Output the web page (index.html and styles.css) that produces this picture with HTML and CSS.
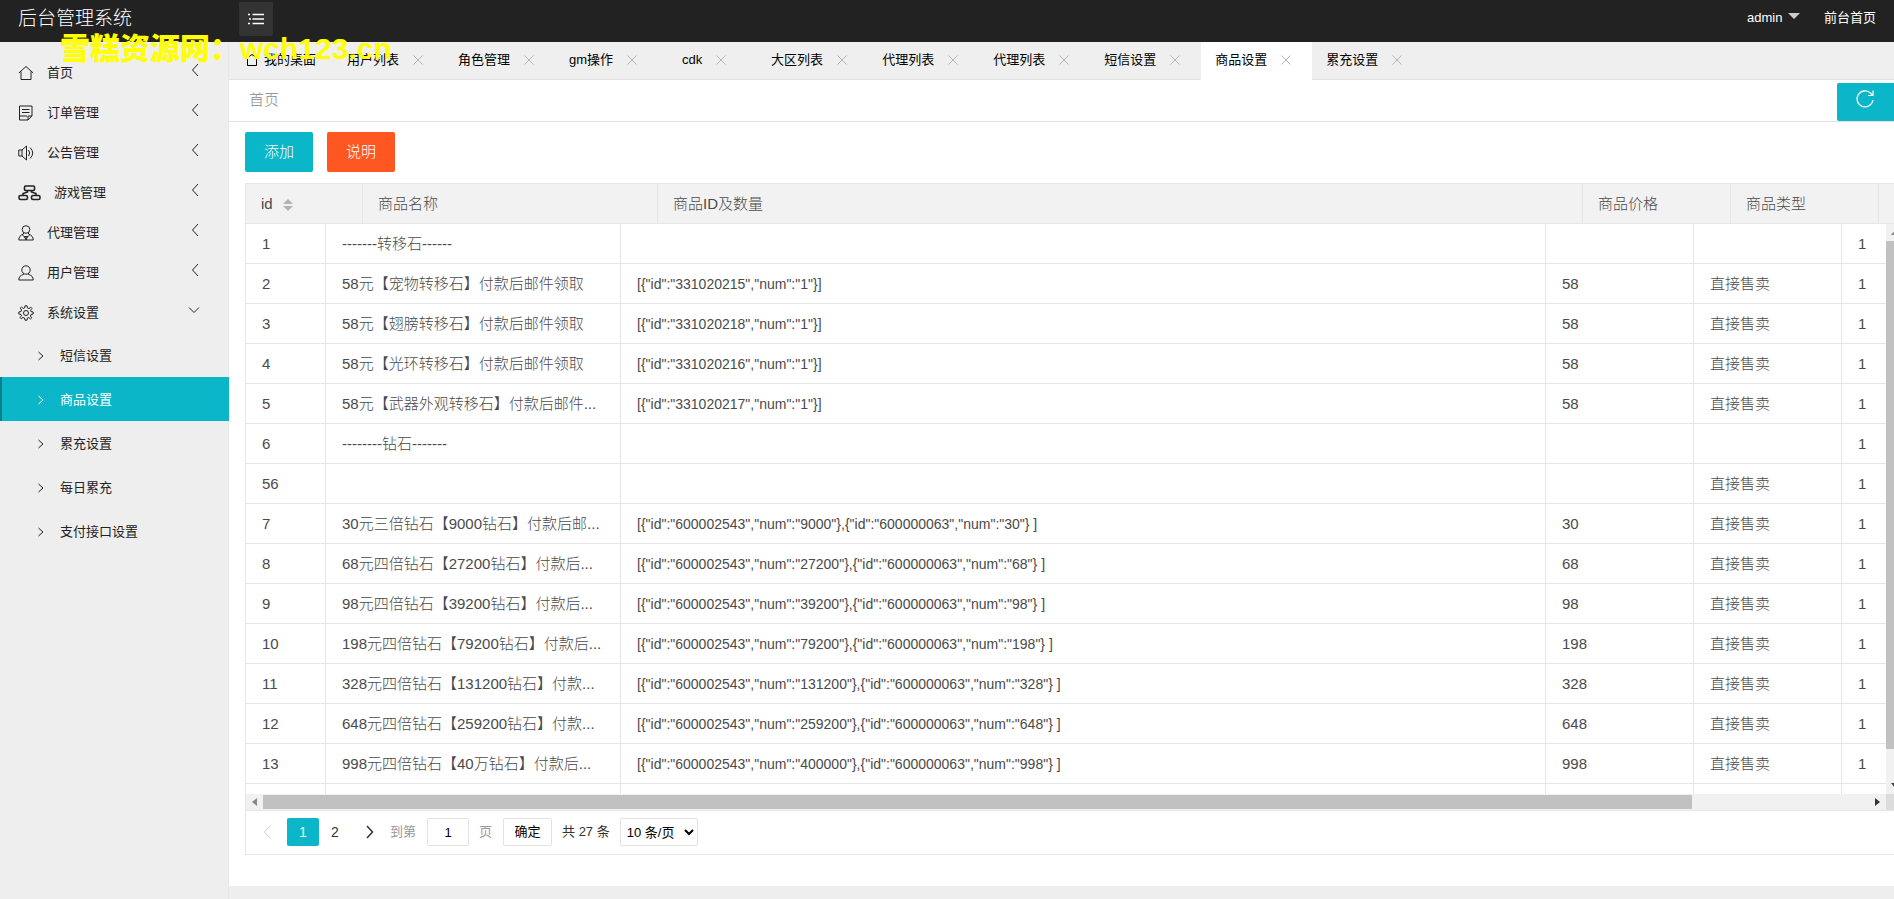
FILE: index.html
```html
<!DOCTYPE html>
<html lang="zh-CN">
<head>
<meta charset="utf-8">
<title>后台管理系统</title>
<link rel="stylesheet" href="styles.css">
</head>
<body>
<svg class="sprite" aria-hidden="true">
  <symbol id="left" viewBox="0 0 8 14"><path d="M7 1 1.5 7 7 13"/></symbol>
  <symbol id="down" viewBox="0 0 12 8"><path d="M1 1.5 6 6.500 11 1.500"/></symbol>
  <symbol id="right" viewBox="0 0 8 10"><path d="M1.500 1 6 5 1.500 9"/></symbol>
  <symbol id="close" viewBox="0 0 10 10"><path d="M.5.5l9 9M9.500.5l-9 9"/></symbol>
</svg>

<header class="topbar">
  <h1 class="brand">后台管理系统</h1>
  <button class="toggle" type="button" aria-label="菜单">
    <svg class="icon" width="16" height="12" viewBox="0 0 16 12"><path d="M4.500 1.500H16M4.500 6H16M4.500 10.500H16M0 1.500h2M1 6h2M0 10.500h2"/></svg>
  </button>
  <nav class="topnav">
    <a href="#">admin <span class="caret"></span></a>
    <a href="#">前台首页</a>
  </nav>
  <div class="watermark">雪糕资源网：wch123.cn</div>
</header>

<div class="layout">
  <aside class="sidebar">
    <a class="item" href="#"><svg class="icon" width="16" height="16" viewBox="0 0 16 16"><path d="M.8 8 8 1.500 15.200 8M3 6.500V14.500H13V6.500"/></svg><span>首页</span><svg class="icon arrow" width="8" height="14"><use href="#left"/></svg></a>
    <a class="item" href="#"><svg class="icon" width="16" height="16" viewBox="0 0 16 16"><path d="M1.500 1H14V11L10 15H1.500ZM14 11H10V15M4 4.500H11.500M4 7.500H11.500M1.500 11H9"/></svg><span>订单管理</span><svg class="icon arrow" width="8" height="14"><use href="#left"/></svg></a>
    <a class="item" href="#"><svg class="icon" width="16" height="16" viewBox="0 0 16 16"><path d="M.8 5H4L8.500 1V15L4 11H.8ZM4 5V11M10.500 5Q13 8 10.500 11M12 2.500Q17.500 8 12 13.500"/></svg><span>公告管理</span><svg class="icon arrow" width="8" height="14"><use href="#left"/></svg></a>
    <a class="item" href="#"><svg class="icon bold" width="23" height="16" viewBox="0 0 23 16"><rect x="6.500" y="1" width="10" height="4.500" rx="1"/><rect x="1" y="10.500" width="8.500" height="4" rx="1.500"/><rect x="13.500" y="10.500" width="8.500" height="4" rx="1.500"/><path d="M9.500 5.500V7L5 8.500V10M13.500 5.500V7L18 8.500V10"/></svg><span>游戏管理</span><svg class="icon arrow" width="8" height="14"><use href="#left"/></svg></a>
    <a class="item" href="#"><svg class="icon" width="16" height="16" viewBox="0 0 16 16"><circle cx="8" cy="4.500" r="3.800"/><path d="M5.500 7.500V9Q.8 10.500.8 15H15.200Q15.200 10.500 10.500 9V7.500M4.500 10 8 13.500 11.500 10M6.500 11.500H9.500L8 15Z"/></svg><span>代理管理</span><svg class="icon arrow" width="8" height="14"><use href="#left"/></svg></a>
    <a class="item" href="#"><svg class="icon" width="16" height="16" viewBox="0 0 16 16"><circle cx="8" cy="5" r="4.200"/><path d="M5.500 8.500V9.500Q.8 10.500.8 15H15.200Q15.200 10.500 10.500 9.500V8.500"/></svg><span>用户管理</span><svg class="icon arrow" width="8" height="14"><use href="#left"/></svg></a>
    <a class="item" href="#"><svg class="icon" width="16" height="16" viewBox="0 0 16 16"><path d="M6.500 3 7 .8H9L9.500 3 11 3.600 12.800 2.200 14 3.500 12.500 5.200 13 6.500 15.200 7V9L13 9.500 12.400 11 13.800 12.800 12.500 14 10.800 12.500 9.500 13 9 15.200H7L6.500 13 5 12.400 3.200 13.800 2 12.500 3.500 10.800 3 9.500.8 9V7L3 6.500 3.600 5 2.200 3.200 3.500 2 5.200 3.500Z"/><circle cx="8" cy="8" r="2.500"/></svg><span>系统设置</span><svg class="icon arrow open" width="12" height="8"><use href="#down"/></svg></a>
    <a class="sub" href="#"><svg class="icon" width="8" height="10"><use href="#right"/></svg>短信设置</a>
    <a class="sub active" href="#"><svg class="icon" width="8" height="10"><use href="#right"/></svg>商品设置</a>
    <a class="sub" href="#"><svg class="icon" width="8" height="10"><use href="#right"/></svg>累充设置</a>
    <a class="sub" href="#"><svg class="icon" width="8" height="10"><use href="#right"/></svg>每日累充</a>
    <a class="sub" href="#"><svg class="icon" width="8" height="10"><use href="#right"/></svg>支付接口设置</a>
  </aside>

  <main class="main">
    <nav class="tabs">
      <a class="tab home" href="#"><svg class="icon" width="12" height="14" viewBox="0 0 12 14"><path d="M1 5 6 1.500 11 5M1.500 5V12.500H10.500V5"/></svg>我的桌面</a>
      <a class="tab" href="#">用户列表<svg class="icon x" width="18" height="10"><use href="#close"/></svg></a>
      <a class="tab" href="#">角色管理<svg class="icon x" width="18" height="10"><use href="#close"/></svg></a>
      <a class="tab" href="#">gm操作<svg class="icon x" width="18" height="10"><use href="#close"/></svg></a>
      <a class="tab" href="#">cdk<svg class="icon x" width="18" height="10"><use href="#close"/></svg></a>
      <a class="tab" href="#">大区列表<svg class="icon x" width="18" height="10"><use href="#close"/></svg></a>
      <a class="tab" href="#">代理列表<svg class="icon x" width="18" height="10"><use href="#close"/></svg></a>
      <a class="tab" href="#">代理列表<svg class="icon x" width="18" height="10"><use href="#close"/></svg></a>
      <a class="tab" href="#">短信设置<svg class="icon x" width="18" height="10"><use href="#close"/></svg></a>
      <a class="tab current" href="#">商品设置<svg class="icon x" width="18" height="10"><use href="#close"/></svg></a>
      <a class="tab" href="#">累充设置<svg class="icon x" width="18" height="10"><use href="#close"/></svg></a>
    </nav>

    <div class="crumbs">
      <a href="#">首页</a>
      <button class="refresh" type="button" aria-label="刷新"><svg class="icon" width="20" height="20" viewBox="0 0 20 20"><path d="M18 11A8 8 0 1 1 16 4.500L18 6.500M18 1.500V6.500H13"/></svg></button>
    </div>

    <div class="actions">
      <button class="btn" type="button">添加</button>
      <button class="btn warn" type="button">说明</button>
    </div>

    <section class="view">
      <div class="head">
        <table class="grid">
          <colgroup><col class="c-idh"><col class="c-name"><col class="c-data"><col class="c-price"><col class="c-price"><col class="c-price"></colgroup>
          <thead><tr><th>id <span class="sort"></span></th><th>商品名称</th><th>商品ID及数量</th><th>商品价格</th><th>商品类型</th><th></th></tr></thead>
        </table>
      </div>
      <div class="rows">
        <table class="grid">
          <colgroup><col class="c-id"><col class="c-name"><col class="c-data"><col class="c-price"><col class="c-price"><col class="c-price"></colgroup>
          <tbody>
          <tr><td>1</td><td>-------转移石------</td><td></td><td></td><td></td><td>1</td></tr>
          <tr><td>2</td><td>58元【宠物转移石】付款后邮件领取</td><td>[{"id":"331020215","num":"1"}]</td><td>58</td><td>直接售卖</td><td>1</td></tr>
          <tr><td>3</td><td>58元【翅膀转移石】付款后邮件领取</td><td>[{"id":"331020218","num":"1"}]</td><td>58</td><td>直接售卖</td><td>1</td></tr>
          <tr><td>4</td><td>58元【光环转移石】付款后邮件领取</td><td>[{"id":"331020216","num":"1"}]</td><td>58</td><td>直接售卖</td><td>1</td></tr>
          <tr><td>5</td><td>58元【武器外观转移石】付款后邮件...</td><td>[{"id":"331020217","num":"1"}]</td><td>58</td><td>直接售卖</td><td>1</td></tr>
          <tr><td>6</td><td>--------钻石-------</td><td></td><td></td><td></td><td>1</td></tr>
          <tr><td>56</td><td></td><td></td><td></td><td>直接售卖</td><td>1</td></tr>
          <tr><td>7</td><td>30元三倍钻石【9000钻石】付款后邮...</td><td>[{"id":"600002543","num":"9000"},{"id":"600000063","num":"30"} ]</td><td>30</td><td>直接售卖</td><td>1</td></tr>
          <tr><td>8</td><td>68元四倍钻石【27200钻石】付款后...</td><td>[{"id":"600002543","num":"27200"},{"id":"600000063","num":"68"} ]</td><td>68</td><td>直接售卖</td><td>1</td></tr>
          <tr><td>9</td><td>98元四倍钻石【39200钻石】付款后...</td><td>[{"id":"600002543","num":"39200"},{"id":"600000063","num":"98"} ]</td><td>98</td><td>直接售卖</td><td>1</td></tr>
          <tr><td>10</td><td>198元四倍钻石【79200钻石】付款后...</td><td>[{"id":"600002543","num":"79200"},{"id":"600000063","num":"198"} ]</td><td>198</td><td>直接售卖</td><td>1</td></tr>
          <tr><td>11</td><td>328元四倍钻石【131200钻石】付款...</td><td>[{"id":"600002543","num":"131200"},{"id":"600000063","num":"328"} ]</td><td>328</td><td>直接售卖</td><td>1</td></tr>
          <tr><td>12</td><td>648元四倍钻石【259200钻石】付款...</td><td>[{"id":"600002543","num":"259200"},{"id":"600000063","num":"648"} ]</td><td>648</td><td>直接售卖</td><td>1</td></tr>
          <tr><td>13</td><td>998元四倍钻石【40万钻石】付款后...</td><td>[{"id":"600002543","num":"400000"},{"id":"600000063","num":"998"} ]</td><td>998</td><td>直接售卖</td><td>1</td></tr>
          <tr><td></td><td></td><td></td><td></td><td></td><td></td></tr>
          </tbody>
        </table>
      </div>
      <div class="vbar"><span class="tri up"></span><span class="vthumb"></span><span class="tri dn"></span></div>
      <div class="hbar"><span class="tri lt"></span><span class="track"><span class="hthumb"></span></span><span class="tri rt"></span></div>
      <div class="corner"></div>
      <form class="pager">
        <a class="pg off" href="#" aria-label="上一页"><svg class="icon" width="8" height="14"><use href="#left"/></svg></a>
        <a class="pg on" href="#">1</a>
        <a class="pg" href="#">2</a>
        <a class="pg next" href="#" aria-label="下一页"><svg class="icon" width="8" height="14"><use href="#left"/></svg></a>
        <label class="muted" for="page">到第</label>
        <input class="num" id="page" type="text" value="1">
        <span class="muted">页</span>
        <button class="ok" type="button">确定</button>
        <span class="total">共 27 条</span>
        <select class="size" aria-label="每页条数"><option>10 条/页</option></select>
      </form>
    </section>
  </main>
</div>
</body>
</html>
```
FILE: styles.css
```css
* { box-sizing: border-box; }
body {
  margin: 0;
  height: 100vh;
  display: flex;
  flex-direction: column;
  overflow: hidden;
  background: #eee;
  color: #222;
  font: 400 13px/20px "Liberation Sans", "Noto Sans CJK SC", sans-serif;
}
a { color: inherit; text-decoration: none; }
button, input, select { font: inherit; }
.sprite { position: absolute; width: 0; height: 0; }
.icon { flex: none; fill: none; stroke: currentColor; stroke-width: 1; }
.icon.bold { stroke-width: 1.6; }

.topbar {
  position: relative;
  flex: none;
  height: 42px;
  display: flex;
  background: #222;
  color: #fff;
}
.brand { width: 239px; margin: 0; padding-left: 18px; font-size: 19px; font-weight: 300; line-height: 38px; }
.toggle {
  width: 34px;
  height: 34px;
  margin-top: 2px;
  padding: 0;
  border: 0;
  border-radius: 2px;
  background: #333;
  color: #fff;
  display: grid;
  place-items: center;
}
.toggle .icon { stroke-width: 1.5; }
.topnav { margin-left: auto; display: flex; gap: 24px; padding-right: 18px; line-height: 36px; }
.caret { display: inline-block; border: 6px solid transparent; border-top-color: #ccc; border-bottom: 0; margin-left: 2px; vertical-align: 3px; }
.watermark {
  position: absolute;
  left: 60px;
  top: 29px;
  z-index: 2;
  color: #ff0;
  font-size: 30px;
  line-height: 40px;
  font-weight: 900;
  white-space: nowrap;
}

.layout { flex: 1; min-height: 0; display: flex; }
.sidebar { flex: none; width: 229px; padding-top: 11px; background: #eee; border-right: 1px solid #e8e8e8; }
.item { height: 40px; display: flex; align-items: center; gap: 13px; padding: 0 29px 0 18px; }
.arrow { margin: 0 0 6px auto; }
.arrow.open { margin-right: -1px; }
.sub { height: 44px; display: flex; align-items: center; gap: 15px; padding: 1px 0 0 37px; }
.sub.active { margin-right: -1px; background: #0ab6c7; color: #fff; border-left: 2px solid #0b7f8b; padding-left: 35px; }

.main { flex: 1; min-width: 0; margin-bottom: 13px; display: flex; flex-direction: column; background: #fff; overflow: hidden; }
.tabs { flex: none; height: 38px; display: flex; padding-left: 3px; background: #efefef; border-bottom: 1px solid #e2e2e2; color: #000; }
.tab { min-width: 99px; height: 36px; display: flex; align-items: center; justify-content: center; gap: 10px; padding: 0 17px 0 14px; }
.tab.home { gap: 6px; }
.tab.current { height: 38px; padding-bottom: 2px; background: #fff; }
.x { color: #b5b5b5; }

.crumbs { flex: none; height: 42px; display: flex; justify-content: space-between; padding-left: 20px; border-bottom: 1px solid #e2e2e2; color: #888; font-size: 15px; font-weight: 300; line-height: 39px; }
.refresh { width: 57px; height: 38px; margin-top: 3px; padding: 0 2px 6px 0; border: 0; border-radius: 2px 0 0 2px; background: #0ab6c7; color: #fff; display: grid; place-items: center; }
.refresh .icon { stroke-width: 1.2; }

.actions { flex: none; display: flex; gap: 14px; padding: 10px 16px 11px; }
.btn { width: 68px; height: 40px; padding: 0; border: 0; border-radius: 2px; background: #0ab6c7; color: #fff; font-size: 15px; font-weight: 300; }
.btn.warn { background: #ff5722; }

.view {
  flex: 1;
  min-height: 0;
  display: grid;
  grid-template: 40px minmax(0, 1fr) 16px 44px / minmax(0, 1fr) 17px;
  margin: 0 -10px 31px 16px;
  border: 1px solid #e6e6e6;
  color: #4a4a4a;
  font-size: 15px;
}
.head { grid-column: 1 / 3; overflow: hidden; background: #f2f2f2; }
.rows { overflow: hidden; }
.grid { width: 1714px; table-layout: fixed; border-collapse: separate; border-spacing: 0; }
.grid th, .grid td {
  height: 40px;
  padding: 0 15px;
  border: 0 solid #e6e6e6;
  border-width: 0 1px 1px 0;
  text-align: left;
  font-weight: 300;
  white-space: nowrap;
}
.grid td { padding: 0 12px 0 16px; }
.grid td:nth-child(3) { font-size: 14px; }
.c-id { width: 80px; }
.c-idh { width: 117px; }
.c-name { width: 295px; }
.c-data { width: 925px; }
.c-price { width: 148px; }
.sort { display: inline-flex; flex-direction: column; gap: 2px; margin-left: 6px; vertical-align: middle; }
.sort::before, .sort::after { content: ""; border: 5px solid transparent; }
.sort::before { border-top: 0; border-bottom-color: #b2b2b2; }
.sort::after { border-bottom: 0; border-top-color: #b2b2b2; }

.vbar { display: flex; flex-direction: column; align-items: center; background: #f1f1f1; padding: 6px 0; gap: 6px; }
.vthumb { width: 100%; height: 91%; background: #c1c1c1; }
.dn { margin-top: auto; }
.hbar { display: flex; align-items: center; gap: 6px; padding: 0 6px; background: #f1f1f1; }
.track { flex: 1; }
.hthumb { display: block; width: 89%; height: 14px; background: #c1c1c1; }
.corner { background: #dcdcdc; }
.tri { flex: none; border: 4px solid transparent; }
.up { border-top: 0; border-bottom: 5px solid #888; }
.dn { border-bottom: 0; border-top: 5px solid #444; }
.lt { border-left: 0; border-right: 5px solid #888; }
.rt { border-right: 0; border-left: 5px solid #333; }

.pager { grid-column: 1 / 3; display: flex; align-items: center; padding: 0 0 1px 5px; border-top: 1px solid #e6e6e6; color: #333; font-size: 13px; }
.pg { width: 32px; height: 28px; display: grid; place-items: center; font-size: 14px; }
.pg.off { color: #ccc; margin-right: 4px; }
.pg.on { background: #0ab6c7; color: #fff; border-radius: 2px; }
.next { margin-left: 3px; }
.next .icon { transform: scaleX(-1); stroke-width: 1.5; }
.muted { color: #999; margin: 0 11px 0 4px; }
.num, .ok, .size { height: 28px; border: 1px solid #e2e2e2; border-radius: 2px; background: #fff; color: #000; padding: 0; }
.num { width: 42px; text-align: center; }
.num + .muted { margin-left: 10px; }
.ok { width: 49px; }
.total { margin: 0 10px; }
.size { width: 78px; padding: 0 2px; }
```
